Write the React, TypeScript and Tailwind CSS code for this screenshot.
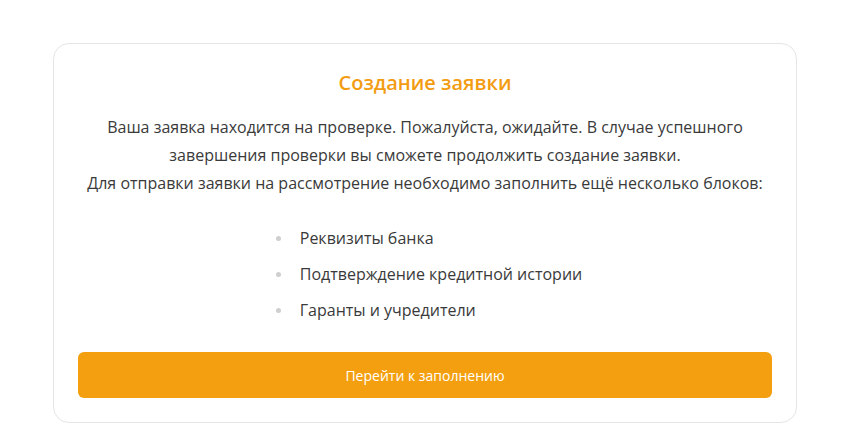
const steps = [
  "Реквизиты банка",
  "Подтверждение кредитной истории",
  "Гаранты и учредители",
];

export default function App() {
  return (
    <div
      className="min-h-screen bg-white pt-[43px]"
      style={{ fontFamily: '"Open Sans", "Noto Sans", sans-serif' }}
    >
      <div className="ml-[53px] w-[744px] rounded-2xl border border-[#e5e5e5] bg-white px-6 pt-[25px] pb-6">
        <h2 className="text-center text-[20px] leading-[28px] font-semibold text-[#f39c12]">
          Создание заявки
        </h2>

        <p className="mt-4 text-center text-[16px] leading-[28px] text-[#3a3a3a]">
          Ваша заявка находится на проверке. Пожалуйста, ожидайте. В случае успешного
          <br />
          завершения проверки вы сможете продолжить создание заявки.
          <br />
          Для отправки заявки на рассмотрение необходимо заполнить ещё несколько блоков:
        </p>

        <div className="mt-[29px] flex justify-center pl-[8px]">
          <ul className="flex flex-col gap-3">
            {steps.map((s) => (
              <li
                key={s}
                className="flex items-center gap-[19px] text-[16px] leading-[24px] text-[#3a3a3a]"
              >
                <span className="h-[5px] w-[5px] rounded-full bg-[#cfcfcf]" />
                {s}
              </li>
            ))}
          </ul>
        </div>

        <button className="mt-[30px] flex h-[46px] w-full items-center justify-center rounded-md bg-[#f39f0f] text-[14px] text-white">
          Перейти к заполнению
        </button>
      </div>
    </div>
  );
}
